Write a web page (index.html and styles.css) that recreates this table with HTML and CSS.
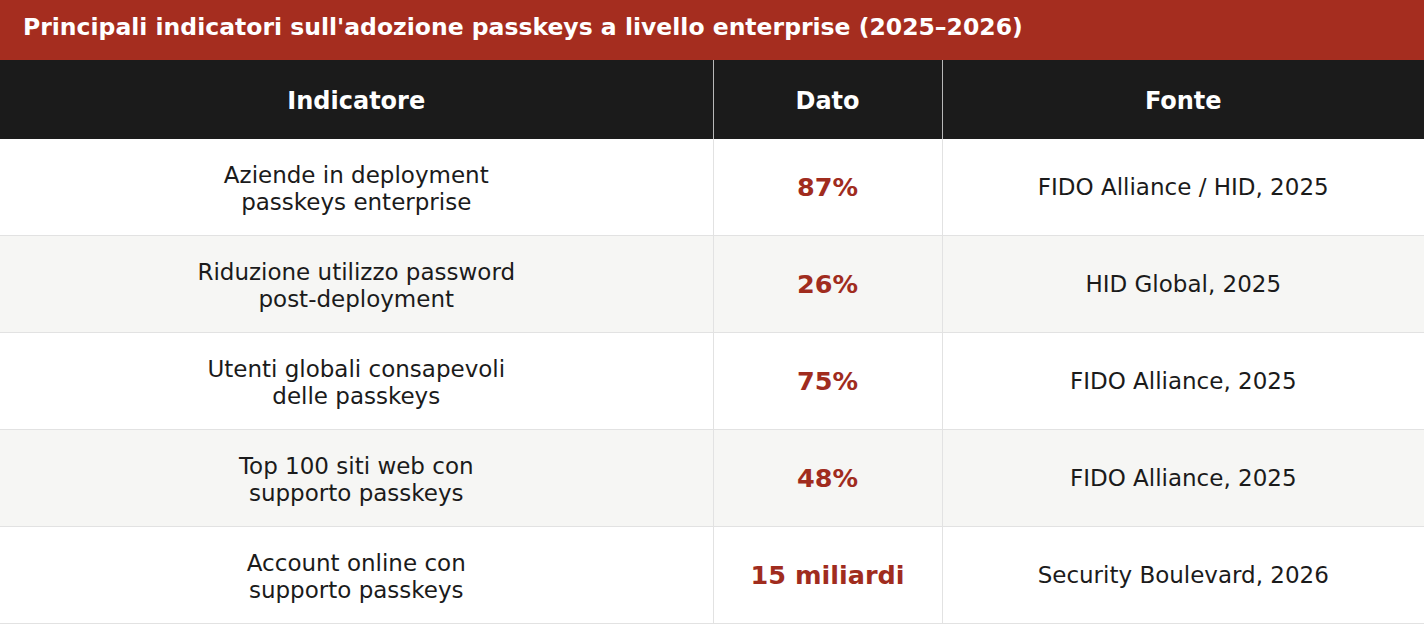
FILE: index.html
```html
<!DOCTYPE html>
<html lang="it">
<head>
<meta charset="utf-8">
<title>Passkeys enterprise</title>
<link rel="stylesheet" href="styles.css">
</head>
<body>
<div class="title-bar">Principali indicatori sull'adozione passkeys a livello enterprise (2025–2026)</div>
<table class="data">
  <colgroup>
    <col class="c1">
    <col class="c2">
    <col class="c3">
  </colgroup>
  <thead>
    <tr><th>Indicatore</th><th>Dato</th><th>Fonte</th></tr>
  </thead>
  <tbody>
    <tr><td class="ind">Aziende in deployment<br>passkeys enterprise</td><td class="val">87%</td><td>FIDO Alliance / HID, 2025</td></tr>
    <tr><td class="ind">Riduzione utilizzo password<br>post-deployment</td><td class="val">26%</td><td>HID Global, 2025</td></tr>
    <tr><td class="ind">Utenti globali consapevoli<br>delle passkeys</td><td class="val">75%</td><td>FIDO Alliance, 2025</td></tr>
    <tr><td class="ind">Top 100 siti web con<br>supporto passkeys</td><td class="val">48%</td><td>FIDO Alliance, 2025</td></tr>
    <tr><td class="ind">Account online con<br>supporto passkeys</td><td class="val">15 miliardi</td><td>Security Boulevard, 2026</td></tr>
  </tbody>
</table>
</body>
</html>
```

FILE: styles.css
```css
html, body {
  margin: 0;
  padding: 0;
  background: #ffffff;
}
body {
  font-family: "DejaVu Sans", "Liberation Sans", sans-serif;
  color: #1b1b1b;
  width: 1424px;
  overflow: hidden;
}
.title-bar {
  background: #a52d1f;
  color: #ffffff;
  font-weight: bold;
  font-size: 23.5px;
  height: 60px;
  line-height: 55px;
  padding: 0 23px;
  box-sizing: border-box;
  white-space: nowrap;
}
.data {
  width: 1424px;
  border-collapse: collapse;
  table-layout: fixed;
}
.c1 { width: 713px; }
.c2 { width: 229px; }
.c3 { width: 482px; }
.data th {
  background: #1b1b1b;
  color: #ffffff;
  font-size: 24px;
  font-weight: bold;
  height: 77px;
  padding: 2px 0 0;
  border-left: 1px solid #b8b8b8;
  text-align: center;
}
.data th:first-child { border-left: none; }
.data td {
  font-size: 23px;
  line-height: 27px;
  height: 96px;
  padding: 0;
  text-align: center;
  border-left: 1px solid #e2e2e2;
  border-bottom: 1px solid #e2e2e2;
}
.data td.ind {
  border-left: none;
  height: 92px;
  padding-top: 4px;
}
.data tbody tr:nth-child(even) td { background: #f6f6f4; }
.data td.val {
  color: #a02c1e;
  font-weight: bold;
  font-size: 25.5px;
}
```
